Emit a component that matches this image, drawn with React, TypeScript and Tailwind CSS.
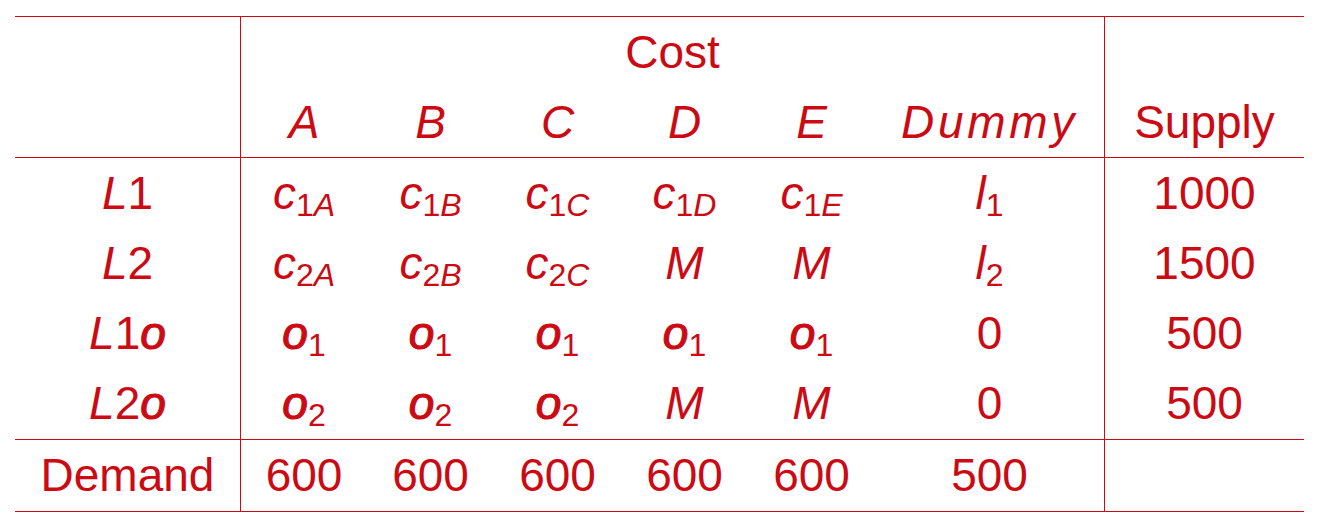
const cols = 'grid grid-cols-[225px_127px_127px_127px_127px_127px_229px_200px]';

function Sub({ base, sub, subItalic, heavy }: { base: string; sub: string; subItalic?: string; heavy?: boolean }) {
  return (
    <span className="whitespace-nowrap">
      <span className={heavy ? 'italic [-webkit-text-stroke:1.2px_#cc0a14]' : 'italic'}>{base}</span>
      <span className="align-[-7px] text-[32px]">
        {sub}
        {subItalic && <span className="italic">{subItalic}</span>}
      </span>
    </span>
  );
}

function Cell({ children, left }: { children?: React.ReactNode; left?: boolean }) {
  return (
    <div className={`flex h-full items-start justify-center ${left ? 'border-l-[1.5px] border-[#cc0a14]' : ''}`}>
      <span className="leading-[70px]">{children}</span>
    </div>
  );
}

const letters = ['A', 'B', 'C', 'D', 'E'];

const heavyO = <i className="[-webkit-text-stroke:1.2px_#cc0a14]">o</i>;

const body: { label: React.ReactNode; cells: React.ReactNode[]; dummy: React.ReactNode; supply: string }[] = [
  {
    label: <><i>L</i>1</>,
    cells: letters.map((l) => <Sub key={l} base="c" sub="1" subItalic={l} />),
    dummy: <Sub base="l" sub="1" />,
    supply: '1000',
  },
  {
    label: <><i>L</i>2</>,
    cells: [
      <Sub key="a" base="c" sub="2" subItalic="A" />,
      <Sub key="b" base="c" sub="2" subItalic="B" />,
      <Sub key="c" base="c" sub="2" subItalic="C" />,
      <i key="d">M</i>,
      <i key="e">M</i>,
    ],
    dummy: <Sub base="l" sub="2" />,
    supply: '1500',
  },
  {
    label: <><i>L</i>1{heavyO}</>,
    cells: letters.map((l) => <Sub key={l} base="o" sub="1" heavy />),
    dummy: '0',
    supply: '500',
  },
  {
    label: <><i>L</i>2{heavyO}</>,
    cells: [
      <Sub key="a" base="o" sub="2" heavy />,
      <Sub key="b" base="o" sub="2" heavy />,
      <Sub key="c" base="o" sub="2" heavy />,
      <i key="d">M</i>,
      <i key="e">M</i>,
    ],
    dummy: '0',
    supply: '500',
  },
];

export default function App() {
  return (
    <div className="h-[526px] w-[1322px] bg-white pt-[16px] font-['Liberation_Sans',Arial,sans-serif] text-[46px] text-[#cc0a14]">
      <div className="ml-[15px] w-[1289px] border-y-[1.5px] border-[#cc0a14]">
        {/* Header */}
        <div className={`${cols} h-[70px]`}>
          <Cell />
          <div className="col-span-6 flex justify-center border-l-[1.5px] border-[#cc0a14]">
            <span className="leading-[70px]">Cost</span>
          </div>
          <Cell left />
        </div>
        <div className={`${cols} h-[71px] border-b-[1.5px] border-[#cc0a14]`}>
          <Cell />
          {letters.map((l, i) => (
            <Cell key={l} left={i === 0}>
              <i>{l}</i>
            </Cell>
          ))}
          <Cell>
            <i className="tracking-[0.08em]">Dummy</i>
          </Cell>
          <Cell left>Supply</Cell>
        </div>

        {/* Body */}
        {body.map((row, r) => (
          <div key={r} className={`${cols} ${r === 3 ? 'h-[72px] border-b-[1.5px] border-[#cc0a14]' : 'h-[70px]'}`}>
            <Cell>{row.label}</Cell>
            {row.cells.map((c, i) => (
              <Cell key={i} left={i === 0}>
                {c}
              </Cell>
            ))}
            <Cell>{row.dummy}</Cell>
            <Cell left>{row.supply}</Cell>
          </div>
        ))}

        {/* Demand */}
        <div className={`${cols} h-[71px]`}>
          <Cell>Demand</Cell>
          {letters.map((l, i) => (
            <Cell key={l} left={i === 0}>
              600
            </Cell>
          ))}
          <Cell>500</Cell>
          <Cell left />
        </div>
      </div>
    </div>
  );
}
